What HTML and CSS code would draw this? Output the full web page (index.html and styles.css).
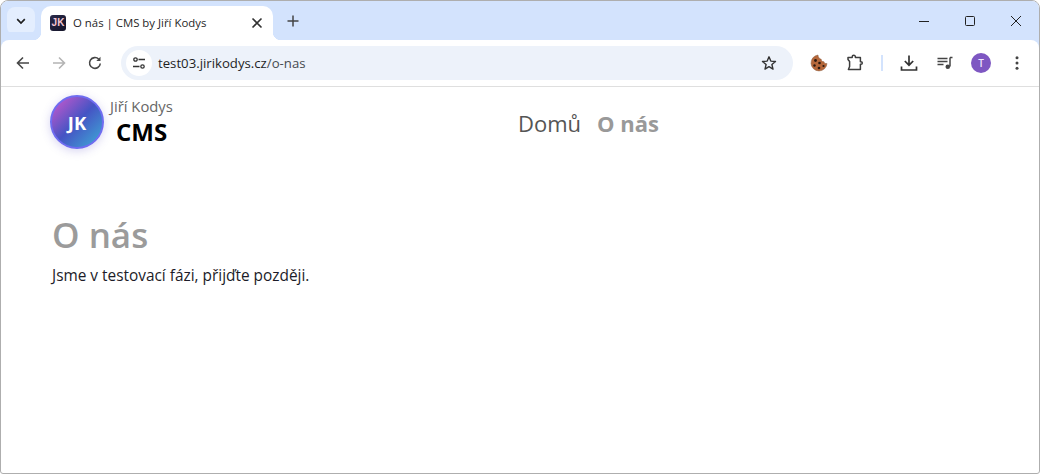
FILE: index.html
```html
<!DOCTYPE html>
<html lang="cs">
<head>
<meta charset="utf-8">
<title>O nás | CMS by Jiří Kodys</title>
<link rel="stylesheet" href="styles.css">
</head>
<body>
<div class="window">
  <div class="tabstrip">
    <button class="tab-search"><svg width="12" height="12" viewBox="0 0 12 12"><path d="M2.2 4.2 6 8l3.8-3.8" fill="none" stroke="#1f1f1f" stroke-width="1.7"/></svg></button>
    <div class="tab">
      <span class="favicon">JK</span>
      <span class="tab-title">O nás | CMS by Jiří Kodys</span>
      <svg class="tab-close" width="12" height="12" viewBox="0 0 12 12"><path d="M1.500 1.500l9 9M10.500 1.500l-9 9" stroke="#333" stroke-width="1.600"/></svg>
    </div>
    <svg class="new-tab" width="14" height="14" viewBox="0 0 14 14"><path d="M7 1.500v11M1.500 7h11" stroke="#444" stroke-width="1.500"/></svg>
    <div class="win-controls">
      <svg width="12" height="12" viewBox="0 0 12 12"><path d="M1 6.500h10" stroke="#222" stroke-width="1"/></svg>
      <svg width="12" height="12" viewBox="0 0 12 12"><rect x="1.500" y="1.500" width="9" height="9" rx="1" fill="none" stroke="#222" stroke-width="1"/></svg>
      <svg width="12" height="12" viewBox="0 0 12 12"><path d="M1 1l10 10M11 1 1 11" stroke="#222" stroke-width="1"/></svg>
    </div>
  </div>
  <div class="toolbar">
    <div class="nav-buttons">
      <svg width="16" height="16" viewBox="0 0 16 16"><path d="M14 8H2.500M8 2.500 2.500 8 8 13.500" fill="none" stroke="#474747" stroke-width="1.600"/></svg>
      <svg width="16" height="16" viewBox="0 0 16 16"><path d="M2 8h11.500M8 2.500 13.500 8 8 13.500" fill="none" stroke="#b4b4b4" stroke-width="1.600"/></svg>
      <svg width="16" height="16" viewBox="0 0 16 16"><path d="M13.300 8.500A5.400 5.400 0 1 1 11.800 4.200" fill="none" stroke="#474747" stroke-width="1.600"/><path d="M13.500 1.800v4.200H9.300z" fill="#474747"/></svg>
    </div>
    <div class="omnibox">
      <span class="site-chip"><svg width="16" height="16" viewBox="0 0 16 16"><g fill="none" stroke="#333" stroke-width="1.300"><circle cx="4.500" cy="4.500" r="1.700"/><path d="M7.500 4.500H14M2 11.500h6.500"/><circle cx="11.500" cy="11.500" r="1.700"/></g></svg></span>
      <span class="url">test03.jirikodys.cz<span class="url-path">/o-nas</span></span>
      <svg class="star" width="16" height="16" viewBox="0 0 16 16"><path d="M8 1.800l1.800 4.300 4.700.4-3.600 3 1.100 4.600L8 11.700l-4 2.400 1.100-4.600-3.600-3 4.700-.4z" fill="none" stroke="#333" stroke-width="1.400" stroke-linejoin="round"/></svg>
    </div>
    <div class="actions">
      <svg width="18" height="18" viewBox="0 0 18 18"><path d="M8 1a8 8 0 1 0 9 8.500c-1.500.5-2.700-.3-3-1.800-1.600.2-2.800-.8-2.800-2.500C9.500 5 8 3.200 8 1z" fill="#b5673a" stroke="#8a5a3c" stroke-width=".5"/><g fill="#2b1a12"><circle cx="5.500" cy="6.500" r="1.400"/><circle cx="9.500" cy="9" r="1.300"/><circle cx="4.500" cy="11.500" r="1.200"/><circle cx="9" cy="14" r="1.300"/><circle cx="13.500" cy="12" r="1.100"/></g></svg>
      <svg width="18" height="18" viewBox="0 0 18 18"><path d="M2 3.500h4.200V2.800a1.600 1.600 0 0 1 3.200 0v.7h5v4.200h.6a1.300 1.300 0 0 1 0 2.600h-.6v5.200H2.400L3.600 12.500V7.500L2 5.500z" fill="none" stroke="#3d3d3d" stroke-width="1.500" stroke-linejoin="round"/></svg>
      <span class="divider"></span>
      <svg width="18" height="18" viewBox="0 0 18 18"><path d="M9 1.500v9.500M4.800 7 9 11.200 13.200 7M1.500 12.500v3.500h15v-3.500" fill="none" stroke="#333" stroke-width="1.700"/></svg>
      <svg width="18" height="18" viewBox="0 0 18 18"><path d="M1.500 4.500h10M1.500 7.500h10M1.500 10.500h6" fill="none" stroke="#444" stroke-width="1.300"/><path d="M14 3.500v9" stroke="#444" stroke-width="1.500"/><path d="M14 3.500h2.500" stroke="#444" stroke-width="1.500"/><circle cx="11.800" cy="12.800" r="2.300" fill="#444"/></svg>
      <span class="avatar">T</span>
      <svg width="16" height="16" viewBox="0 0 16 16"><g fill="#444"><circle cx="8" cy="2.800" r="1.500"/><circle cx="8" cy="8" r="1.500"/><circle cx="8" cy="13.200" r="1.500"/></g></svg>
    </div>
  </div>
  <main class="page">
    <header class="site-header">
      <div class="brand">
        <span class="logo">JK</span>
        <div class="brand-text">
          <span class="brand-author">Jiří Kodys</span>
          <span class="brand-name">CMS</span>
        </div>
      </div>
      <nav class="site-nav">
        <a class="nav-link">Domů</a>
        <a class="nav-link active">O nás</a>
      </nav>
    </header>
    <section class="content">
      <h1>O nás</h1>
      <p>Jsme v testovací fázi, přijďte později.</p>
    </section>
  </main>
</div>
</body>
</html>
```
FILE: styles.css
```css
* { box-sizing: border-box; }
html, body { margin: 0; height: 100%; overflow: hidden; }
body { font-family: "Open Sans", "Noto Sans", sans-serif; background: #fff; }

.window {
  height: 474px;
  display: flex;
  flex-direction: column;
  border: 1px solid #aeaeae;
  border-radius: 8px 8px 3px 3px;
  overflow: hidden;
  background: #fff;
}

/* Tab strip */
.tabstrip {
  height: 39px;
  flex: none;
  display: flex;
  align-items: flex-end;
  background: #d3e3fd;
}
.tab-search {
  width: 28px;
  height: 28px;
  margin: 0 6px 5px 6px;
  padding: 0;
  border: 0;
  border-radius: 8px;
  background: #e4eefe;
  display: flex;
  align-items: center;
  justify-content: center;
}
.tab {
  position: relative;
  width: 232px;
  height: 34px;
  display: flex;
  align-items: center;
  padding: 0 10px 0 9px;
  background: #fff;
  border-radius: 10px 10px 0 0;
}
.tab::before, .tab::after {
  content: "";
  position: absolute;
  bottom: 0;
  width: 8px;
  height: 8px;
}
.tab::before { left: -8px; background: radial-gradient(circle at 0 0, transparent 8px, #fff 8.5px); }
.tab::after { right: -8px; background: radial-gradient(circle at 100% 0, transparent 8px, #fff 8.5px); }
.favicon {
  width: 16px;
  height: 16px;
  border-radius: 3px;
  background: linear-gradient(135deg, #2a2a4a, #141428);
  color: #f3c6d3;
  font: 700 10px/16px "Liberation Sans Narrow", "Liberation Sans", sans-serif;
  text-align: center;
  flex: none;
}
.tab-title {
  margin-left: 7px;
  flex: 1;
  font: 11.400px/16px "Open Sans", sans-serif;
  color: #1f1f1f;
  white-space: nowrap;
}
.tab-close { flex: none; }
.new-tab { margin: 0 0 12px 13px; }
.win-controls {
  margin-left: auto;
  align-self: stretch;
  display: flex;
  align-items: center;
  gap: 34px;
  padding: 0 17px 0 0;
}

/* Toolbar */
.toolbar {
  height: 47px;
  flex: none;
  display: flex;
  align-items: center;
  background: #fff;
  border-bottom: 1px solid #dfdfdf;
  border-radius: 8px 8px 0 0;
  box-shadow: 0 -8px 0 #d3e3fd;
}
.nav-buttons {
  display: flex;
  gap: 20px;
  padding-left: 14px;
  width: 120px;
  flex: none;
}
.omnibox {
  width: 672px;
  height: 34px;
  flex: none;
  display: flex;
  align-items: center;
  padding: 0 16px 0 5px;
  border-radius: 17px;
  background: #edf2fa;
}
.site-chip {
  width: 26px;
  height: 26px;
  border-radius: 50%;
  background: #fff;
  display: flex;
  align-items: center;
  justify-content: center;
  flex: none;
}
.url {
  margin-left: 6px;
  flex: 1;
  font: 13.200px/18px "Open Sans", sans-serif;
  color: #1f1f1f;
  white-space: nowrap;
}
.url-path { color: #474b50; }
.actions {
  display: flex;
  align-items: center;
  padding-left: 17px;
  gap: 18px;
}
.divider { width: 2px; height: 16px; margin: 0 -1px; background: #d3e3fd; }
.avatar {
  width: 20px;
  height: 20px;
  margin-left: -1px;
  border-radius: 50%;
  background: #7e57c2;
  color: #f0e8ff;
  font: 600 10px/20px "Open Sans", sans-serif;
  text-align: center;
}

/* Page */
.page { flex: 1; padding: 8px 0 0 49px; }
.site-header { display: flex; align-items: flex-start; }
.brand { display: flex; width: 400px; flex: none; }
.logo {
  width: 54px;
  height: 54px;
  border-radius: 50%;
  border: 2px solid #6f6cf0;
  background: linear-gradient(135deg, #bb58cc 8%, #4554c4 50%, #3f9fd4 92%);
  box-shadow: 0 2px 10px rgba(90, 80, 200, .25);
  color: #fff;
  font: 700 18.500px/52px "Open Sans", sans-serif;
  text-align: center;
  flex: none;
}
.brand-text { margin-left: 6px; display: flex; flex-direction: column; }
.brand-author { font-size: 14.800px; line-height: 22px; color: #666; }
.brand-name { font-size: 24px; font-weight: 700; line-height: 30px; color: #000; margin: 0 0 0 6px; }
.site-nav { display: flex; gap: 16px; margin: 10px 0 0 68px; }
.nav-link { font-size: 22px; line-height: 36px; color: #555; }
.nav-link.active { font-weight: 700; color: #999; }

.content { margin: 62px 0 0 2px; }
h1 { margin: 0; font-size: 35px; font-weight: 600; line-height: 48px; color: #9b9b9b; }
p { margin: 6px 0 0; font-size: 15.400px; line-height: 22px; color: #1c1c28; }
```
